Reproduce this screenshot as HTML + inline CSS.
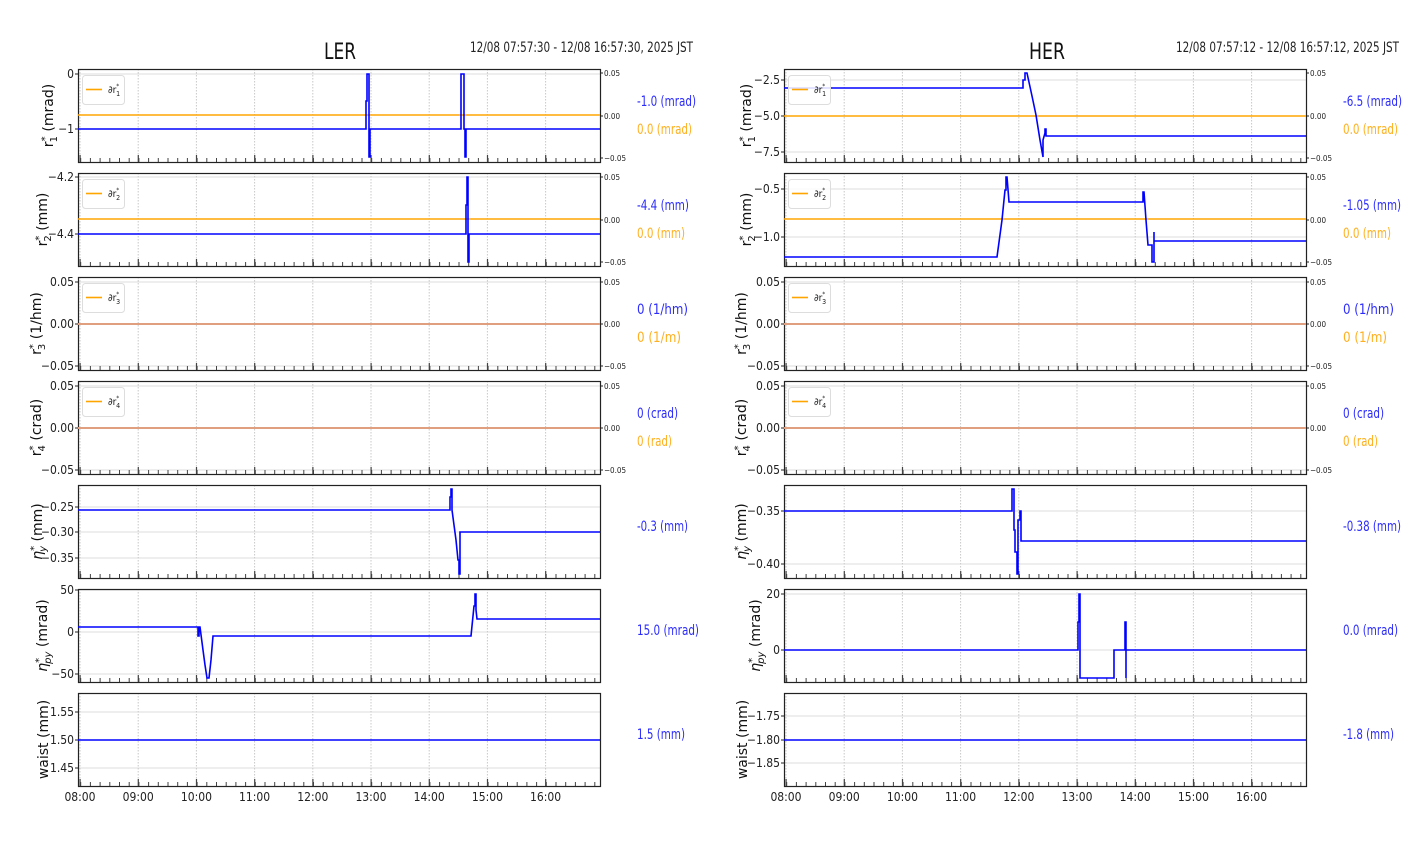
<!DOCTYPE html>
<html><head><meta charset="utf-8"><style>
html,body{margin:0;padding:0;background:#fff;width:1412px;height:864px;overflow:hidden}
svg{display:block}
.t{font-family:"DejaVu Sans Condensed","DejaVu Sans","Liberation Sans",sans-serif;font-stretch:condensed;font-size:12px;fill:#222}
.s{font-family:"DejaVu Sans Condensed","DejaVu Sans","Liberation Sans",sans-serif;font-stretch:condensed;font-size:8px;fill:#222}
.yl{font-family:"DejaVu Sans","Liberation Sans",sans-serif;font-size:14px;fill:#111}
.an{font-family:"DejaVu Sans Condensed","DejaVu Sans","Liberation Sans",sans-serif;font-size:14px}
.b{fill:#2b2bff}.o{fill:#ffb020}
.d{fill:none;stroke:#0000ff;stroke-width:1.6}
.g{stroke:#ddd;stroke-width:1}
</style></head><body>
<svg width="1412" height="864" viewBox="0 0 1412 864" xmlns="http://www.w3.org/2000/svg">
<defs>
<symbol id="f" overflow="visible">
<path d="M2 0v93M60.2 0v93M118.4 0v93M176.6 0v93M234.8 0v93M293 0v93M351.2 0v93M409.4 0v93M467.6 0v93" stroke="#c8c8c8" stroke-width="1" stroke-dasharray="1.5 1.5"/>
<line x1="1.5" y1="89.5" x2="522" y2="89.5" stroke="#444" stroke-width="7" stroke-dasharray="1.2 57"/>
<line x1="2.2" y1="91" x2="522" y2="91" stroke="#444" stroke-width="4" stroke-dasharray="1 8.7"/>
<rect x="0.5" y="0.5" width="522" height="93" fill="none" stroke="#222" stroke-width="1.2"/>
</symbol>
<symbol id="lg" overflow="visible">
<rect x="0.5" y="0.5" width="42" height="29" rx="3" fill="#fff" fill-opacity="0.85" stroke="#ddd"/>
<line x1="4" y1="14.5" x2="20" y2="14.5" stroke="#ffa500" stroke-width="1.6"/>
</symbol>
</defs>

<text x="340" y="59" text-anchor="middle" style="font-family:'DejaVu Sans',sans-serif;font-size:22px" fill="#111" textLength="32" lengthAdjust="spacingAndGlyphs">LER</text>
<text x="470" y="52" class="t" style="font-size:14px" textLength="223" lengthAdjust="spacingAndGlyphs">12/08 07:57:30 - 12/08 16:57:30, 2025 JST</text>
<text x="1047" y="59" text-anchor="middle" style="font-family:'DejaVu Sans',sans-serif;font-size:22px" fill="#111" textLength="36" lengthAdjust="spacingAndGlyphs">HER</text>
<text x="1176" y="52" class="t" style="font-size:14px" textLength="223" lengthAdjust="spacingAndGlyphs">12/08 07:57:12 - 12/08 16:57:12, 2025 JST</text>

<g class="g">
<path d="M78 74H600M78 129H600M78 177H600M78 234H600M78 282H600M78 324H600M78 366H600M78 386H600M78 428H600M78 470H600M78 507H600M78 532H600M78 558H600M78 590H600M78 632H600M78 674H600M78 712H600M78 740H600M78 768H600"/>
<path d="M784 80H1306M784 116H1306M784 152H1306M784 189H1306M784 237H1306M784 282H1306M784 324H1306M784 366H1306M784 386H1306M784 428H1306M784 470H1306M784 511H1306M784 564H1306M784 594H1306M784 650H1306M784 716H1306M784 740H1306M784 763H1306"/>
</g>

<use href="#f" x="78" y="69"/><use href="#f" x="78" y="173"/><use href="#f" x="78" y="277"/><use href="#f" x="78" y="381"/><use href="#f" x="78" y="485"/><use href="#f" x="78" y="589"/><use href="#f" x="78" y="693"/>
<use href="#f" x="784" y="69"/><use href="#f" x="784" y="173"/><use href="#f" x="784" y="277"/><use href="#f" x="784" y="381"/><use href="#f" x="784" y="485"/><use href="#f" x="784" y="589"/><use href="#f" x="784" y="693"/>

<path d="M600 73h3M600 116h3M600 158h3M600 177h3M600 220h3M600 262h3M600 282h3M600 324h3M600 366h3M600 386h3M600 428h3M600 470h3M1306 73h3M1306 116h3M1306 158h3M1306 177h3M1306 220h3M1306 262h3M1306 282h3M1306 324h3M1306 366h3M1306 386h3M1306 428h3M1306 470h3" stroke="#222"/>
<g class="s">
<text x="604" y="76">0.05</text><text x="604" y="119">0.00</text><text x="604" y="161">−0.05</text>
<text x="604" y="180">0.05</text><text x="604" y="223">0.00</text><text x="604" y="265">−0.05</text>
<text x="604" y="285">0.05</text><text x="604" y="327">0.00</text><text x="604" y="369">−0.05</text>
<text x="604" y="389">0.05</text><text x="604" y="431">0.00</text><text x="604" y="473">−0.05</text>
<text x="1310" y="76">0.05</text><text x="1310" y="119">0.00</text><text x="1310" y="161">−0.05</text>
<text x="1310" y="180">0.05</text><text x="1310" y="223">0.00</text><text x="1310" y="265">−0.05</text>
<text x="1310" y="285">0.05</text><text x="1310" y="327">0.00</text><text x="1310" y="369">−0.05</text>
<text x="1310" y="389">0.05</text><text x="1310" y="431">0.00</text><text x="1310" y="473">−0.05</text>
</g>

<path d="M75 74h3M75 129h3M75 177h3M75 234h3M75 282h3M75 324h3M75 366h3M75 386h3M75 428h3M75 470h3M75 507h3M75 532h3M75 558h3M75 590h3M75 632h3M75 674h3M75 712h3M75 740h3M75 768h3M781 80h3M781 116h3M781 152h3M781 189h3M781 237h3M781 282h3M781 324h3M781 366h3M781 386h3M781 428h3M781 470h3M781 511h3M781 564h3M781 594h3M781 650h3M781 716h3M781 740h3M781 763h3" stroke="#222"/>
<g class="t" text-anchor="end">
<text x="74" y="78">0</text><text x="74" y="133">−1</text>
<text x="74" y="181">−4.2</text><text x="74" y="238">−4.4</text>
<text x="74" y="286">0.05</text><text x="74" y="328">0.00</text><text x="74" y="370">−0.05</text>
<text x="74" y="390">0.05</text><text x="74" y="432">0.00</text><text x="74" y="474">−0.05</text>
<text x="74" y="511">−0.25</text><text x="74" y="536">−0.30</text><text x="74" y="562">−0.35</text>
<text x="74" y="594">50</text><text x="74" y="636">0</text><text x="74" y="678">−50</text>
<text x="74" y="716">1.55</text><text x="74" y="744">1.50</text><text x="74" y="772">1.45</text>
<text x="780" y="84">−2.5</text><text x="780" y="120">−5.0</text><text x="780" y="156">−7.5</text>
<text x="780" y="193">−0.5</text><text x="780" y="241">−1.0</text>
<text x="780" y="286">0.05</text><text x="780" y="328">0.00</text><text x="780" y="370">−0.05</text>
<text x="780" y="390">0.05</text><text x="780" y="432">0.00</text><text x="780" y="474">−0.05</text>
<text x="780" y="515">−0.35</text><text x="780" y="568">−0.40</text>
<text x="780" y="598">20</text><text x="780" y="654">0</text>
<text x="780" y="720">−1.75</text><text x="780" y="744">−1.80</text><text x="780" y="767">−1.85</text>
</g>

<g class="t" text-anchor="middle">
<text x="80" y="801">08:00</text><text x="138.2" y="801">09:00</text><text x="196.4" y="801">10:00</text><text x="254.6" y="801">11:00</text><text x="312.8" y="801">12:00</text><text x="371" y="801">13:00</text><text x="429.2" y="801">14:00</text><text x="487.4" y="801">15:00</text><text x="545.6" y="801">16:00</text>
<text x="786" y="801">08:00</text><text x="844.2" y="801">09:00</text><text x="902.4" y="801">10:00</text><text x="960.6" y="801">11:00</text><text x="1018.8" y="801">12:00</text><text x="1077" y="801">13:00</text><text x="1135.2" y="801">14:00</text><text x="1193.4" y="801">15:00</text><text x="1251.6" y="801">16:00</text>
</g>

<g class="yl" text-anchor="middle">
<text transform="translate(53,115.5) rotate(-90)">r<tspan dy="-5" font-size="10">*</tspan><tspan dy="9" dx="-6" font-size="10">1</tspan><tspan dy="-4">  (mrad)</tspan></text>
<text transform="translate(47,219.5) rotate(-90)">r<tspan dy="-5" font-size="10">*</tspan><tspan dy="9" dx="-6" font-size="10">2</tspan><tspan dy="-4">  (mm)</tspan></text>
<text transform="translate(41,323.5) rotate(-90)">r<tspan dy="-5" font-size="10">*</tspan><tspan dy="9" dx="-6" font-size="10">3</tspan><tspan dy="-4">  (1/hm)</tspan></text>
<text transform="translate(41,427.5) rotate(-90)">r<tspan dy="-5" font-size="10">*</tspan><tspan dy="9" dx="-6" font-size="10">4</tspan><tspan dy="-4">  (crad)</tspan></text>
<text transform="translate(42,531.5) rotate(-90)"><tspan font-style="italic">η</tspan><tspan dy="-5" font-size="10">*</tspan><tspan dy="9" dx="-6" font-size="10" font-style="italic">y</tspan><tspan dy="-4">  (mm)</tspan></text>
<text transform="translate(47,635.5) rotate(-90)"><tspan font-style="italic">η</tspan><tspan dy="-5" font-size="10">*</tspan><tspan dy="9" dx="-6" font-size="10" font-style="italic">py</tspan><tspan dy="-4"> (mrad)</tspan></text>
<text transform="translate(48,739.5) rotate(-90)">waist (mm)</text>
<text transform="translate(751,115.5) rotate(-90)">r<tspan dy="-5" font-size="10">*</tspan><tspan dy="9" dx="-6" font-size="10">1</tspan><tspan dy="-4">  (mrad)</tspan></text>
<text transform="translate(751,219.5) rotate(-90)">r<tspan dy="-5" font-size="10">*</tspan><tspan dy="9" dx="-6" font-size="10">2</tspan><tspan dy="-4">  (mm)</tspan></text>
<text transform="translate(746,323.5) rotate(-90)">r<tspan dy="-5" font-size="10">*</tspan><tspan dy="9" dx="-6" font-size="10">3</tspan><tspan dy="-4">  (1/hm)</tspan></text>
<text transform="translate(746,427.5) rotate(-90)">r<tspan dy="-5" font-size="10">*</tspan><tspan dy="9" dx="-6" font-size="10">4</tspan><tspan dy="-4">  (crad)</tspan></text>
<text transform="translate(746,531.5) rotate(-90)"><tspan font-style="italic">η</tspan><tspan dy="-5" font-size="10">*</tspan><tspan dy="9" dx="-6" font-size="10" font-style="italic">y</tspan><tspan dy="-4">  (mm)</tspan></text>
<text transform="translate(760,635.5) rotate(-90)"><tspan font-style="italic">η</tspan><tspan dy="-5" font-size="10">*</tspan><tspan dy="9" dx="-6" font-size="10" font-style="italic">py</tspan><tspan dy="-4"> (mrad)</tspan></text>
<text transform="translate(747,739.5) rotate(-90)">waist (mm)</text>
</g>

<g stroke="#ffa500" stroke-width="1.6">
<path d="M78 115H600M78 219H600M784 116H1306M784 219H1306"/>
<path d="M78 324H600M78 428H600M784 324H1306M784 428H1306" stroke="#e0a080" stroke-width="2"/>
</g>

<g class="d">
<path d="M78 129H366V101H367V74H369V157H370V129H461V74H464V129H465V157H466V129H600"/>
<path d="M78 234H466V205H467V177H468V262H469V234H600"/>
<path d="M78 510H450V497H451V489H452V510L456 540L458 560H459V574H460V532H600"/>
<path d="M78 627H198V636H199V627H200L203 650L205 665L207 678H209L211 660L213 636H471L474 606H475V594H476V610L477 619H600"/>
<path d="M78 740H600"/>
<path d="M784 88H1023V80H1025V73H1027L1032 96L1036 115L1040 140L1043 157V140L1045 133V129H1046V136H1306"/>
<path d="M784 257H997L1002 220L1005 190H1006V177H1007L1009 202H1143V192H1144L1146 220L1148 245H1152V262H1154V232V241H1306"/>
<path d="M784 511H1012V489H1014V530H1015V552H1017V574H1018V520H1020V511H1021V541H1306"/>
<path d="M784 650H1078V622H1079V594H1080V678H1114V650H1125V622H1126V678H1126V650H1306"/>
<path d="M784 740H1306"/>
</g>

<use href="#lg" x="82" y="75"/><use href="#lg" x="82" y="179"/><use href="#lg" x="82" y="283"/><use href="#lg" x="82" y="387"/>
<use href="#lg" x="788" y="75"/><use href="#lg" x="788" y="179"/><use href="#lg" x="788" y="283"/><use href="#lg" x="788" y="387"/>
<g class="s" style="font-size:10px">
<text x="108" y="93">∂r<tspan dy="-5" font-size="6">*</tspan><tspan dy="8" dx="-3" font-size="7">1</tspan></text>
<text x="108" y="197">∂r<tspan dy="-5" font-size="6">*</tspan><tspan dy="8" dx="-3" font-size="7">2</tspan></text>
<text x="108" y="301">∂r<tspan dy="-5" font-size="6">*</tspan><tspan dy="8" dx="-3" font-size="7">3</tspan></text>
<text x="108" y="405">∂r<tspan dy="-5" font-size="6">*</tspan><tspan dy="8" dx="-3" font-size="7">4</tspan></text>
<text x="814" y="93">∂r<tspan dy="-5" font-size="6">*</tspan><tspan dy="8" dx="-3" font-size="7">1</tspan></text>
<text x="814" y="197">∂r<tspan dy="-5" font-size="6">*</tspan><tspan dy="8" dx="-3" font-size="7">2</tspan></text>
<text x="814" y="301">∂r<tspan dy="-5" font-size="6">*</tspan><tspan dy="8" dx="-3" font-size="7">3</tspan></text>
<text x="814" y="405">∂r<tspan dy="-5" font-size="6">*</tspan><tspan dy="8" dx="-3" font-size="7">4</tspan></text>
</g>

<g class="an">
<text x="637" y="106" class="b" textLength="59" lengthAdjust="spacingAndGlyphs">-1.0 (mrad)</text><text x="637" y="134" class="o" textLength="55" lengthAdjust="spacingAndGlyphs">0.0 (mrad)</text>
<text x="637" y="210" class="b" textLength="52" lengthAdjust="spacingAndGlyphs">-4.4 (mm)</text><text x="637" y="238" class="o" textLength="48" lengthAdjust="spacingAndGlyphs">0.0 (mm)</text>
<text x="637" y="314" class="b" textLength="51" lengthAdjust="spacingAndGlyphs">0 (1/hm)</text><text x="637" y="342" class="o" textLength="44" lengthAdjust="spacingAndGlyphs">0 (1/m)</text>
<text x="637" y="418" class="b" textLength="41" lengthAdjust="spacingAndGlyphs">0 (crad)</text><text x="637" y="446" class="o" textLength="35" lengthAdjust="spacingAndGlyphs">0 (rad)</text>
<text x="637" y="531" class="b" textLength="51" lengthAdjust="spacingAndGlyphs">-0.3 (mm)</text>
<text x="637" y="635" class="b" textLength="62" lengthAdjust="spacingAndGlyphs">15.0 (mrad)</text>
<text x="637" y="739" class="b" textLength="48" lengthAdjust="spacingAndGlyphs">1.5 (mm)</text>
<text x="1343" y="106" class="b" textLength="59" lengthAdjust="spacingAndGlyphs">-6.5 (mrad)</text><text x="1343" y="134" class="o" textLength="55" lengthAdjust="spacingAndGlyphs">0.0 (mrad)</text>
<text x="1343" y="210" class="b" textLength="58" lengthAdjust="spacingAndGlyphs">-1.05 (mm)</text><text x="1343" y="238" class="o" textLength="48" lengthAdjust="spacingAndGlyphs">0.0 (mm)</text>
<text x="1343" y="314" class="b" textLength="51" lengthAdjust="spacingAndGlyphs">0 (1/hm)</text><text x="1343" y="342" class="o" textLength="44" lengthAdjust="spacingAndGlyphs">0 (1/m)</text>
<text x="1343" y="418" class="b" textLength="41" lengthAdjust="spacingAndGlyphs">0 (crad)</text><text x="1343" y="446" class="o" textLength="35" lengthAdjust="spacingAndGlyphs">0 (rad)</text>
<text x="1343" y="531" class="b" textLength="58" lengthAdjust="spacingAndGlyphs">-0.38 (mm)</text>
<text x="1343" y="635" class="b" textLength="55" lengthAdjust="spacingAndGlyphs">0.0 (mrad)</text>
<text x="1343" y="739" class="b" textLength="51" lengthAdjust="spacingAndGlyphs">-1.8 (mm)</text>
</g>
</svg>
</body></html>
